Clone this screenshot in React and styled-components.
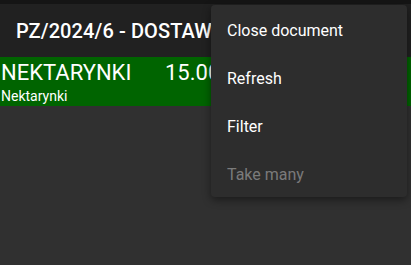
import styled, { createGlobalStyle } from "styled-components";

const GlobalStyle = createGlobalStyle`
  html, body {
    margin: 0;
    padding: 0;
    background: #303030;
  }
  body {
    font-family: Roboto, "Noto Sans", Arial, sans-serif;
  }
`;

const Screen = styled.div`
  position: relative;
  width: 411px;
  height: 265px;
  background: #303030;
  overflow: hidden;
`;

const StatusStrip = styled.div`
  height: 4px;
  background: #151515;
`;

const AppBar = styled.header`
  height: 53px;
  background: #212121;
  display: flex;
  align-items: center;
  padding: 1px 16px 0;
  box-sizing: border-box;
  overflow: hidden;
`;

const Title = styled.h1`
  margin: 0;
  color: #ffffff;
  font-size: 20px;
  font-weight: 500;
  white-space: nowrap;
  letter-spacing: 0.1px;
`;

const ItemRow = styled.div`
  background: #006400;
  height: 49px;
  display: flex;
  flex-direction: column;
  justify-content: center;
  padding: 1px 0 0 1px;
  box-sizing: border-box;
  color: #ffffff;
`;

const TopLine = styled.div`
  display: flex;
  align-items: baseline;
  height: 28px;
`;

const Name = styled.span`
  width: 164px;
  font-size: 22px;
  line-height: 28px;
`;

const Qty = styled.span`
  font-size: 22px;
  line-height: 28px;
`;

const SubName = styled.div`
  font-size: 14px;
  line-height: 18px;
`;

const Menu = styled.ul`
  position: absolute;
  top: 5px;
  right: 4px;
  width: 196px;
  margin: 0;
  padding: 0;
  list-style: none;
  background: #2d2d2d;
  border-radius: 4px;
  box-shadow: 0 3px 8px rgba(0, 0, 0, 0.45);
`;

const MenuItem = styled.li`
  height: 48px;
  display: flex;
  align-items: center;
  padding: 2px 16px 0;
  box-sizing: border-box;
  font-size: 16px;
  color: ${(p) => (p.disabled ? "rgba(255,255,255,0.38)" : "#ffffff")};
`;

const items = [
  { label: "Close document" },
  { label: "Refresh" },
  { label: "Filter" },
  { label: "Take many", disabled: true },
];

export default function App() {
  return (
    <Screen>
      <GlobalStyle />
      <StatusStrip />
      <AppBar>
        <Title>PZ/2024/6 - DOSTAWA</Title>
      </AppBar>
      <ItemRow>
        <TopLine>
          <Name>NEKTARYNKI</Name>
          <Qty>15.00</Qty>
        </TopLine>
        <SubName>Nektarynki</SubName>
      </ItemRow>
      <Menu>
        {items.map((it) => (
          <MenuItem key={it.label} disabled={it.disabled}>
            {it.label}
          </MenuItem>
        ))}
      </Menu>
    </Screen>
  );
}
